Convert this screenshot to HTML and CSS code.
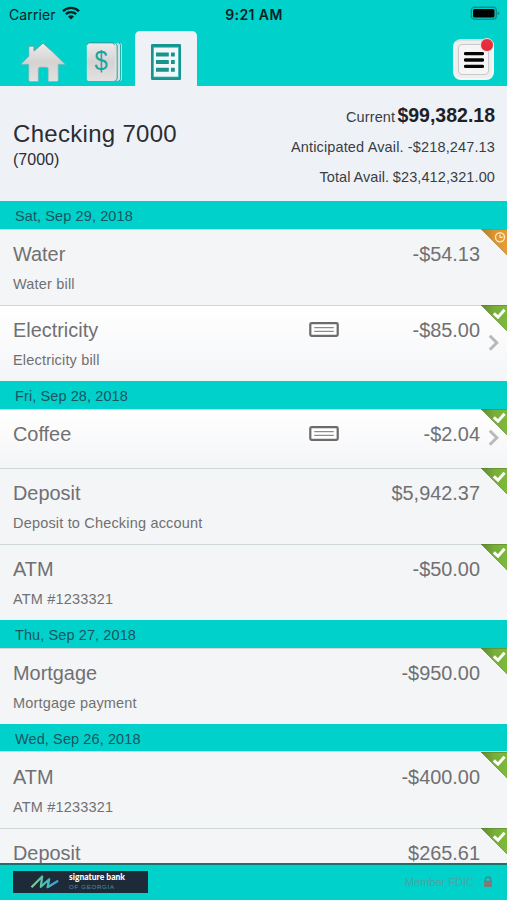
FILE: index.html
```html
<!DOCTYPE html>
<html lang="en">
<head>
  <meta charset="utf-8">
  <title>Checking 7000</title>
  <link rel="stylesheet" href="styles.css">
</head>
<body>
  <!-- shared icons -->
  <svg class="icon-defs" width="0" height="0">
    <defs>
      <linearGradient id="silver" x1="0" y1="0" x2="0" y2="1">
        <stop offset="0" stop-color="#ececec"/>
        <stop offset="0.5" stop-color="#d5d2d2"/>
        <stop offset="1" stop-color="#e2e1e1"/>
      </linearGradient>
      <linearGradient id="green" x1="0" y1="0" x2="1" y2="0">
        <stop offset="0" stop-color="#5d8a30"/>
        <stop offset="0.5" stop-color="#77ad38"/>
        <stop offset="1" stop-color="#7dba3c"/>
      </linearGradient>
      <linearGradient id="orange" x1="0" y1="0" x2="1" y2="0">
        <stop offset="0" stop-color="#b07a2c"/>
        <stop offset="0.5" stop-color="#dc9430"/>
        <stop offset="1" stop-color="#e59c34"/>
      </linearGradient>
      <linearGradient id="signature" x1="0" y1="0" x2="1" y2="0">
        <stop offset="0" stop-color="#7fd08a"/>
        <stop offset="0.5" stop-color="#4cc0b5"/>
        <stop offset="1" stop-color="#3a9be0"/>
      </linearGradient>
    </defs>
    <symbol id="cleared" viewBox="0 0 26 26">
      <path d="M0 0H26V26Z" fill="url(#green)"/>
      <path d="M0 0L26 26M0 .4H26" fill="none" stroke="#567f2c" stroke-opacity=".6"/>
      <path d="M12.8 8.4L17 12.2L23.6 4.8" fill="none" stroke="#fff" stroke-width="3"/>
    </symbol>
    <symbol id="pending" viewBox="0 0 26 26">
      <path d="M0 0H26V26Z" fill="url(#orange)"/>
      <path d="M0 0L26 26M0 .4H26" fill="none" stroke="#a3742c" stroke-opacity=".6"/>
      <circle cx="19" cy="8.2" r="4.5" fill="none" stroke="#fbe6c4" stroke-width="1.4"/>
      <path d="M19 5.4V8.4H21.8" fill="none" stroke="#fbe6c4" stroke-width="1.2"/>
    </symbol>
    <symbol id="check" viewBox="0 0 30 15">
      <rect x="1.3" y="1.2" width="27.4" height="12.6" rx="1.2" fill="#fff" stroke="#6b6b6e" stroke-width="2.2"/>
      <path d="M5.2 5.6H24.8M5.2 9.4H24.8" stroke="#8c8c8f" stroke-width="1.4"/>
    </symbol>
    <symbol id="arrow" viewBox="0 0 11 18">
      <path d="M1.8 1.8L8.8 8.8L1.8 15.8" fill="none" stroke="#b9b9bb" stroke-width="3"/>
    </symbol>
  </svg>

  <div class="app">
    <header class="header">
      <div class="status-bar">
        <div class="carrier">
          <span>Carrier</span>
          <svg class="wifi" viewBox="0 0 18 14" width="18" height="14">
            <path d="M1 5.2C5.6.8 12.4.8 17 5.2M3.8 8.2C6.8 5.4 11.2 5.4 14.2 8.2" fill="none" stroke="#06201f" stroke-width="2.3"/>
            <path d="M9 13.6L6 10.5Q9 8.2 12 10.5Z" fill="#06201f"/>
          </svg>
        </div>
        <span class="time">9:21 AM</span>
        <svg class="battery" viewBox="0 0 30 15" width="30" height="15">
          <rect x="1.3" y="1.3" width="25" height="12" rx="3.2" fill="none" stroke="#078f8b" stroke-width="1.4"/>
          <rect x="3" y="3" width="21.5" height="8.6" rx="1.6" fill="#000"/>
          <path d="M27.6 5.2Q31 7.3 27.6 9.4Z" fill="#078f8b"/>
        </svg>
      </div>

      <nav class="tabs">
        <a class="tab tab-home">
          <svg viewBox="0 0 46 40" width="46" height="40">
            <path d="M23 1.2L30.5 8 45 22.3H38.2V38.2Q38.2 39.5 36.8 39.5H28.2V27Q28.2 25.2 26.5 25.2H20Q18.3 25.2 18.3 27V39.5H10.2Q8.8 39.5 8.8 38.2V22.3H1L9 14.2V4.2H14V9.2Z" fill="url(#silver)" stroke="#8fb1af" stroke-width=".6"/>
            <path d="M9 5V4H14V8.8L23 1L31 8.2" fill="none" stroke="#5c9b98" stroke-width=".7"/>
          </svg>
        </a>
        <a class="tab tab-accounts">
          <svg viewBox="0 0 38 40" width="38" height="40">
            <path d="M26 1.2H33.8Q36 1.2 36 3.4V36.6Q36 38.8 33.8 38.8H26Z" fill="#dedfdf"/>
            <path d="M29.2 1Q31.2 2 31.2 4V36Q31.2 38 29.2 39M33 1Q34.6 2 34.6 4V36Q34.6 38 33 39" fill="none" stroke="#1aa8a3" stroke-width="1"/>
            <rect x=".8" y="1" width="27.6" height="38" rx="2.6" fill="url(#silver)"/>
            <path d="M1 3Q1.4 .9 3.4 .9H26Q28.2 .9 28.4 3" fill="none" stroke="#43807d" stroke-width=".8"/>
            <text class="dollar" transform="translate(15 28) scale(.88 1)" text-anchor="middle">$</text>
          </svg>
        </a>
        <a class="tab tab-register active">
          <svg viewBox="0 0 30 36" width="30" height="36">
            <rect x="0" y="0" width="30" height="36" rx="1.2" fill="#14958f"/>
            <rect x="2.5" y="3.2" width="25" height="29.8" fill="#f4f7f8" stroke="#35b8b3" stroke-width=".7"/>
            <path d="M5 10.6H17.8M20 10.6H23.8M5 18H17.8M20 18H23.8M5 25.8H17.8M20 25.8H23.8" stroke="#16948f" stroke-width="4"/>
          </svg>
        </a>
        <button class="menu-button" type="button">
          <span class="menu-face">
            <svg viewBox="0 0 20 18" width="20" height="18">
              <path d="M1.5 2.6H18.5M1.5 9H18.5M1.5 15.4H18.5" stroke="#050505" stroke-width="3.4" stroke-linecap="round"/>
            </svg>
          </span>
          <span class="menu-badge"></span>
        </button>
      </nav>
    </header>

    <section class="summary">
      <div class="account">
        <h1>Checking 7000</h1>
        <p>(7000)</p>
      </div>
      <div class="balances">
        <div class="balance current"><span>Current</span> <strong>$99,382.18</strong></div>
        <div class="balance">Anticipated Avail. -$218,247.13</div>
        <div class="balance total">Total Avail. $23,412,321.00</div>
      </div>
    </section>

    <main class="register">
      <h2 class="date">Sat, Sep 29, 2018</h2>
      <div class="row">
        <div class="row-main"><span class="name">Water</span><span class="amount">-$54.13</span></div>
        <p class="memo">Water bill</p>
        <svg class="corner"><use href="#pending"/></svg>
      </div>
      <div class="row linked">
        <div class="row-main"><span class="name">Electricity</span><svg class="check"><use href="#check"/></svg><span class="amount">-$85.00</span></div>
        <p class="memo">Electricity bill</p>
        <svg class="corner"><use href="#cleared"/></svg>
        <svg class="arrow"><use href="#arrow"/></svg>
      </div>

      <h2 class="date">Fri, Sep 28, 2018</h2>
      <div class="row linked short">
        <div class="row-main"><span class="name">Coffee</span><svg class="check"><use href="#check"/></svg><span class="amount">-$2.04</span></div>
        <svg class="corner"><use href="#cleared"/></svg>
        <svg class="arrow"><use href="#arrow"/></svg>
      </div>
      <div class="row">
        <div class="row-main"><span class="name">Deposit</span><span class="amount">$5,942.37</span></div>
        <p class="memo">Deposit to Checking account</p>
        <svg class="corner"><use href="#cleared"/></svg>
      </div>
      <div class="row">
        <div class="row-main"><span class="name">ATM</span><span class="amount">-$50.00</span></div>
        <p class="memo">ATM #1233321</p>
        <svg class="corner"><use href="#cleared"/></svg>
      </div>

      <h2 class="date">Thu, Sep 27, 2018</h2>
      <div class="row">
        <div class="row-main"><span class="name">Mortgage</span><span class="amount">-$950.00</span></div>
        <p class="memo">Mortgage payment</p>
        <svg class="corner"><use href="#cleared"/></svg>
      </div>

      <h2 class="date">Wed, Sep 26, 2018</h2>
      <div class="row">
        <div class="row-main"><span class="name">ATM</span><span class="amount">-$400.00</span></div>
        <p class="memo">ATM #1233321</p>
        <svg class="corner"><use href="#cleared"/></svg>
      </div>
      <div class="row">
        <div class="row-main"><span class="name">Deposit</span><span class="amount">$265.61</span></div>
        <svg class="corner"><use href="#cleared"/></svg>
      </div>
    </main>

    <footer class="footer">
      <div class="bank-logo">
        <svg viewBox="0 0 30 14" width="30" height="14">
          <path d="M1.5 12.3L12.2 1.5L10.8 11.8L19.2 4.2L17.6 12.2L28.2 5.8" fill="none" stroke="url(#signature)" stroke-width="2.2" stroke-linejoin="round"/>
        </svg>
        <div class="bank-name">
          <span class="bank-title">signature bank</span>
          <span class="bank-state">OF GEORGIA</span>
        </div>
      </div>
      <div class="fdic">
        <span>Member FDIC</span>
        <svg viewBox="0 0 10 12" width="10" height="12">
          <path d="M2.4 5V3.4Q2.4 1 5 1T7.6 3.4V5" fill="none" stroke="#557f7d" stroke-width="1.3"/>
          <rect x="1.2" y="4.8" width="7.6" height="6" fill="#8a7270"/>
          <path d="M1.2 7.4H8.8" stroke="#4e9b98" stroke-width=".8"/>
        </svg>
      </div>
    </footer>
  </div>
</body>
</html>
```
FILE: styles.css
```css
* {
  box-sizing: border-box;
}

body {
  margin: 0;
  font-family: "Liberation Sans", Arial, sans-serif;
  background-color: #00d1cb;
}

h1, h2, p {
  margin: 0;
  font-weight: normal;
}

.icon-defs {
  display: block;
  height: 0;
}

.app {
  display: flex;
  flex-direction: column;
  width: 507px;
  height: 900px;
  overflow: hidden;
}

/* Header */

.header {
  flex: none;
  height: 86px;
  background-color: #00d1cb;
}

.status-bar {
  display: grid;
  grid-template-columns: 1fr auto 1fr;
  align-items: center;
  height: 28px;
  padding: 0 7px 0 9px;
  font-family: Inter, sans-serif;
  font-size: 14px;
  color: #06201f;
}

.carrier {
  display: flex;
  align-items: center;
  gap: 6px;
  letter-spacing: 0.1px;
}

.wifi {
  margin-top: -2px;
}

.time {
  font-weight: 600;
  letter-spacing: 0.4px;
  padding-right: 1px;
}

.battery {
  justify-self: end;
  margin-top: -1px;
}

.tabs {
  display: flex;
  height: 58px;
  padding: 0 13px 0 20px;
}

.tab {
  flex: none;
  display: block;
}

.tab svg {
  display: block;
}

.tab-home {
  width: 66px;
  padding-top: 14px;
}

.tab-accounts {
  width: 50px;
  padding-top: 14px;
}

.tab-register {
  width: 62px;
  height: 55px;
  margin: 3px 0 0 -1px;
  padding: 13px 0 0 16px;
  border-radius: 5px 5px 0 0;
  background-color: #eef2f6;
}

.dollar {
  font-size: 27px;
  fill: #16a5a0;
}

.menu-button {
  position: relative;
  width: 41px;
  height: 41px;
  margin: 11px 0 0 auto;
  padding: 3px;
  border: 2px solid #f7f7f8;
  border-top-color: #dcdfe0;
  border-radius: 8px;
  background-color: #eeeeef;
}

.menu-face {
  display: flex;
  align-items: center;
  justify-content: center;
  height: 31px;
  border: 1px solid #c9c9cb;
  border-radius: 4px;
  background-color: #f5f5f6;
}

.menu-badge {
  position: absolute;
  top: -3px;
  right: -2px;
  width: 14px;
  height: 14px;
  border: 1px solid #f5dcdf;
  border-radius: 50%;
  background: linear-gradient(#f0303c, #dd2b38);
}

/* Account summary */

.summary {
  flex: none;
  display: flex;
  justify-content: space-between;
  height: 115px;
  padding: 0 12px 0 13px;
  background-color: #eef2f6;
  color: #2a2d35;
}

.account {
  padding-top: 34px;
}

.account h1 {
  font-size: 24px;
  line-height: 28px;
  letter-spacing: 0.3px;
}

.account p {
  font-size: 16px;
  line-height: 24px;
}

.balances {
  padding-top: 14px;
  text-align: right;
  font-size: 14.5px;
  letter-spacing: 0.14px;
  color: #3a3d44;
}

.balance {
  height: 30px;
  line-height: 34px;
  white-space: nowrap;
}

.balance.current {
  line-height: 30px;
  word-spacing: -2px;
}

.current strong {
  font-size: 19.5px;
  letter-spacing: 0;
  color: #1d2028;
}

.balance.total {
  line-height: 34px;
  letter-spacing: 0.1px;
  word-spacing: -0.5px;
}

/* Transactions */

.register {
  flex: 1;
  min-height: 0;
  overflow: hidden;
  background-color: #f4f5f7;
}

.date {
  height: 27.5px;
  padding-left: 15px;
  background-color: #00d1cb;
  color: #1b5560;
  font-size: 14.5px;
  letter-spacing: 0.1px;
  line-height: 30px;
}

.row {
  position: relative;
  height: 76.25px;
  padding: 12px 27px 0 13px;
  border-top: 1px solid #cfd6d8;
  background-color: #f4f5f7;
  color: #707072;
}

.row.linked {
  background: linear-gradient(#ffffff, #f4f5f7);
}

.row.short {
  height: 59px;
}

.row-main {
  display: grid;
  grid-template-columns: 295px auto 1fr;
  align-items: center;
  height: 26px;
  font-size: 19.9px;
}

.amount {
  grid-column: 3;
  text-align: right;
}

.memo {
  margin-top: 7.6px;
  font-size: 14.5px;
  letter-spacing: 0.18px;
  line-height: 18px;
}

.check {
  width: 30px;
  height: 15px;
  margin-left: 0.5px;
  margin-top: -2px;
}

.corner {
  position: absolute;
  top: -0.5px;
  right: 0;
  width: 26px;
  height: 26px;
}

.arrow {
  position: absolute;
  top: calc(50% - 9px);
  right: 8px;
  width: 11px;
  height: 18px;
}

.row.short .arrow {
  top: calc(50% - 10px);
}

/* Footer */

.footer {
  flex: none;
  display: flex;
  align-items: flex-start;
  justify-content: space-between;
  height: 37px;
  padding: 6px 14px 0 13px;
  border-top: 2px solid #1f6f6d;
  background-color: #00d1cb;
}

.bank-logo {
  display: flex;
  align-items: center;
  width: 135px;
  height: 22px;
  padding-left: 17px;
  background-color: #1d2b38;
}

.bank-name {
  display: flex;
  flex-direction: column;
  padding-left: 9px;
}

.bank-title {
  font-family: Lato, sans-serif;
  font-weight: 900;
  font-size: 8.5px;
  line-height: 10px;
  color: #ffffff;
  white-space: nowrap;
}

.bank-state {
  font-size: 6.2px;
  line-height: 10px;
  letter-spacing: 0.65px;
  color: #4a8fa8;
}

.fdic {
  display: flex;
  align-items: center;
  gap: 9px;
  height: 22px;
  font-size: 11px;
  color: #4aa5a2;
}
```
